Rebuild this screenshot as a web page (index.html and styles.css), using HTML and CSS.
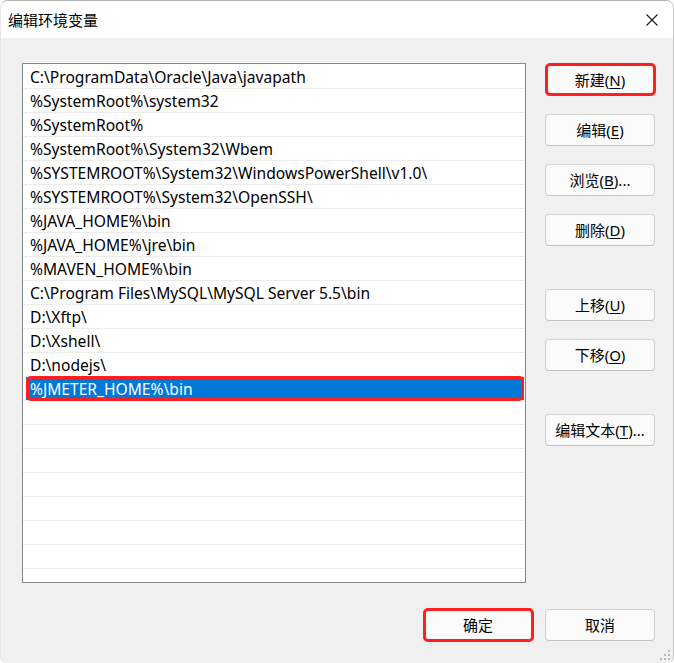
FILE: index.html
```html
<!DOCTYPE html>
<html lang="zh-CN">
<head>
<meta charset="utf-8">
<title>编辑环境变量</title>
<link rel="stylesheet" href="styles.css">
</head>
<body>
<div class="window">
  <div class="titlebar">
    <span class="title">编辑环境变量</span>
    <svg class="close" width="14" height="14" viewBox="0 0 14 14"><path d="M1.5 1.5 L12.5 12.5 M12.5 1.5 L1.5 12.5" stroke="#1a1a1a" stroke-width="1.1" fill="none"/></svg>
  </div>
  <div class="content">
    <div class="main">
      <div class="list">
        <div class="row">C:\ProgramData\Oracle\Java\javapath</div>
        <div class="row">%SystemRoot%\system32</div>
        <div class="row">%SystemRoot%</div>
        <div class="row">%SystemRoot%\System32\Wbem</div>
        <div class="row">%SYSTEMROOT%\System32\WindowsPowerShell\v1.0\</div>
        <div class="row">%SYSTEMROOT%\System32\OpenSSH\</div>
        <div class="row">%JAVA_HOME%\bin</div>
        <div class="row">%JAVA_HOME%\jre\bin</div>
        <div class="row">%MAVEN_HOME%\bin</div>
        <div class="row">C:\Program Files\MySQL\MySQL Server 5.5\bin</div>
        <div class="row">D:\Xftp\</div>
        <div class="row">D:\Xshell\</div>
        <div class="row">D:\nodejs\</div>
        <div class="row selected"><span class="sel-fill">%JMETER_HOME%\bin</span><span class="mark mark-row"></span></div>
        <div class="row"></div>
        <div class="row"></div>
        <div class="row"></div>
        <div class="row"></div>
        <div class="row"></div>
        <div class="row"></div>
        <div class="row"></div>
        <div class="row"></div>
      </div>
      <div class="side">
        <button class="btn marked">新建(<u>N</u>)<span class="mark mark-btn"></span></button>
        <button class="btn">编辑(<u>E</u>)</button>
        <button class="btn">浏览(<u>B</u>)...</button>
        <button class="btn">删除(<u>D</u>)</button>
        <button class="btn group">上移(<u>U</u>)</button>
        <button class="btn">下移(<u>O</u>)</button>
        <button class="btn group">编辑文本(<u>T</u>)...</button>
      </div>
    </div>
    <div class="footer">
      <button class="btn marked">确定<span class="mark mark-ok"></span></button>
      <button class="btn">取消</button>
    </div>
  </div>
  <svg class="grip" width="12" height="12" viewBox="0 0 12 12">
    <rect x="8" y="0" width="2" height="2" fill="#b8b8b8"/>
    <rect x="4" y="4" width="2" height="2" fill="#b8b8b8"/>
    <rect x="8" y="4" width="2" height="2" fill="#b8b8b8"/>
    <rect x="0" y="8" width="2" height="2" fill="#b8b8b8"/>
    <rect x="4" y="8" width="2" height="2" fill="#b8b8b8"/>
    <rect x="8" y="8" width="2" height="2" fill="#b8b8b8"/>
  </svg>
</div>
</body>
</html>
```

FILE: styles.css
```css
* { box-sizing: border-box; }
html, body { margin: 0; padding: 0; background: #ffffff; }
body {
  font-family: "Noto Sans", "Noto Sans CJK SC", sans-serif;
  font-size: 15px;
  color: #000;
}
.window {
  position: relative;
  width: 674px;
  height: 663px;
  background: #f0f0f0;
  border-top: 1px solid #b0b0b0;
  border-left: 1px solid #e6e6e6;
  border-right: 1px solid #c8c8c8;
  border-radius: 8px 8px 6px 6px;
  overflow: hidden;
}
.titlebar {
  height: 37px;
  background: #ffffff;
  display: flex;
  align-items: center;
  justify-content: space-between;
  padding: 0 14px 0 7px;
}
.title {
  font-family: "Noto Sans CJK SC", sans-serif;
  font-size: 15px;
  line-height: 20px;
  margin-top: 1px;
}
.close { display: block; margin-top: 1px; }
.content {
  padding: 25px 0 0 21px;
}
.main {
  display: flex;
  align-items: flex-start;
}
.list {
  width: 504px;
  height: 520px;
  background: #fff;
  border: 1px solid #828790;
  padding-top: 1px;
  overflow: hidden;
}
.row {
  position: relative;
  height: 24px;
  border-bottom: 1px solid #ececec;
  padding-left: 7px;
  padding-top: 1px;
  line-height: 22px;
  white-space: nowrap;
  font-size: 15.6px;
}
.row.selected {
  padding-left: 0;
  padding-top: 0;
}
.sel-fill {
  display: block;
  margin-left: 3px;
  margin-right: 1px;
  height: 23px;
  line-height: 24px;
  background: #0078d7;
  color: #fff;
  padding-left: 4px;
}
.side {
  display: flex;
  flex-direction: column;
  gap: 18px;
  margin-left: 19px;
  padding-top: 1px;
}
.btn {
  position: relative;
  width: 110px;
  height: 32px;
  padding: 0;
  background: #fbfbfb;
  border: 1px solid #d3d3d3;
  border-bottom-color: #c2c2c2;
  border-radius: 4px;
  font-family: "Noto Sans", "Noto Sans CJK SC", sans-serif;
  font-size: 15px;
  color: #000;
  line-height: 30px;
}
.btn u { text-underline-offset: 2px; }
.btn.group { margin-top: 25px; }
.footer {
  display: flex;
  justify-content: flex-end;
  gap: 12px;
  margin-top: 26px;
  padding-right: 18px;
}
.mark {
  position: absolute;
  border: 3px solid #ff1f1f;
  border-radius: 5px;
  pointer-events: none;
}
.mark-row { left: 3px; right: 1px; top: -1px; bottom: -1px; }
.mark-btn { left: -1px; right: -2px; top: -2px; bottom: -1px; }
.mark-ok { left: -1px; right: -2px; top: -2px; bottom: -2px; }
.grip {
  position: absolute;
  right: 1px;
  bottom: 1px;
}
```
